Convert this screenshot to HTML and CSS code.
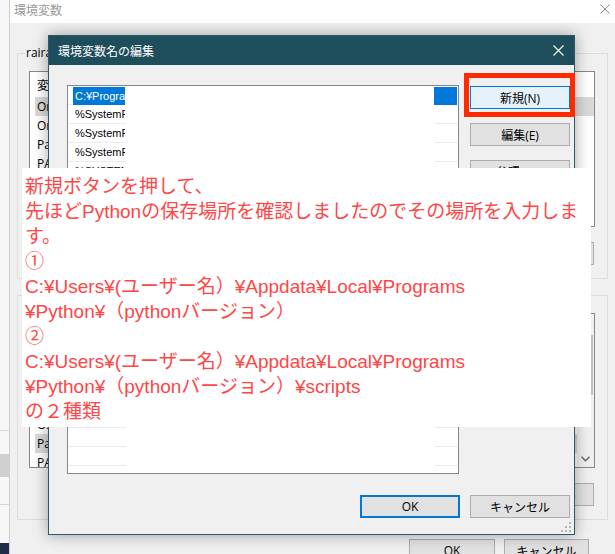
FILE: index.html
```html
<!DOCTYPE html>
<html lang="ja">
<head>
<meta charset="utf-8">
<title>環境変数</title>
<link rel="stylesheet" href="styles.css">
</head>
<body>
<div class="desk">
  <div class="backwin"></div>

  <div class="envwin">
    <div class="env-title">
      <span>環境変数</span>
      <svg class="xicon" width="10" height="10" viewBox="0 0 10 10"><path d="M0.5 0.5L9.5 9.5M9.5 0.5L0.5 9.5" stroke="#8a8a8a" stroke-width="1" fill="none"/></svg>
    </div>
    <div class="env-body">
      <div class="grp grp1">
        <span class="grp-label">rairaのユーザー環境変数(U)</span>
        <div class="list list1">
          <div class="lhead">変数</div>
          <div class="lrow sel">OneDrive</div>
          <div class="lrow">OneDriveConsumer</div>
          <div class="lrow">Path</div>
          <div class="lrow">PATH</div>
          <div class="lrow">TEMP</div>
          <div class="lrow">TMP</div>
        </div>
        <div class="grp-btns">
          <button class="btn">新規(N)...</button>
          <button class="btn">編集(E)...</button>
          <button class="btn">削除(D)</button>
        </div>
      </div>
      <div class="grp grp2">
        <span class="grp-label">システム環境変数(S)</span>
        <div class="list list2">
          <div class="lcontent">
            <div class="lhead">変数</div>
            <div class="lrow">ComSpec</div>
            <div class="lrow">DriverData</div>
            <div class="lrow">NUMBER_OF_PROCESSORS</div>
            <div class="lrow">OnlineServices</div>
            <div class="lrow">OS</div>
            <div class="lrow sel">Path</div>
            <div class="lrow">PATHEXT</div>
          </div>
          <div class="sb">
            <div class="sb-track"><div class="sb-thumb"></div></div>
            <div class="sb-arrow">
              <svg width="9" height="6" viewBox="0 0 9 6"><path d="M0.5 0.8L4.5 4.8L8.5 0.8" stroke="#606060" stroke-width="1.3" fill="none"/></svg>
            </div>
          </div>
        </div>
        <div class="grp-btns">
          <button class="btn">新規(W)...</button>
          <button class="btn">編集(I)...</button>
          <button class="btn">削除(L)</button>
        </div>
      </div>
      <div class="main-btns">
        <button class="btn ok0">OK</button>
        <button class="btn cancel0">キャンセル</button>
      </div>
    </div>
  </div>

  <div class="dlg">
    <div class="dlg-title">
      <span>環境変数名の編集</span>
      <svg class="xicon" width="11" height="11" viewBox="0 0 11 11"><path d="M0.5 0.5L10.5 10.5M10.5 0.5L0.5 10.5" stroke="#ffffff" stroke-width="1.1" fill="none"/></svg>
    </div>
    <div class="dlg-body">
      <div class="elist">
        <div class="erow sel"><span class="ecell">C:¥Program Files (x86)¥Common Files¥Oracle¥Java¥javapath</span><span class="eblock"></span></div>
        <div class="erow"><span class="ecell">%SystemRoot%¥system32</span></div>
        <div class="erow"><span class="ecell">%SystemRoot%</span></div>
        <div class="erow"><span class="ecell">%SystemRoot%¥System32¥Wbem</span></div>
        <div class="erow"><span class="ecell">%SYSTEMROOT%¥System32¥WindowsPowerShell¥v1.0¥</span></div>
        <div class="erow"><span class="ecell">%SYSTEMROOT%¥System32¥OpenSSH¥</span></div>
        <div class="erow"><span class="ecell"></span></div>
        <div class="erow"><span class="ecell"></span></div>
        <div class="erow"><span class="ecell"></span></div>
        <div class="erow"><span class="ecell"></span></div>
        <div class="erow"><span class="ecell"></span></div>
        <div class="erow"><span class="ecell"></span></div>
        <div class="erow"><span class="ecell"></span></div>
        <div class="erow"><span class="ecell"></span></div>
        <div class="erow"><span class="ecell"></span></div>
        <div class="erow"><span class="ecell"></span></div>
        <div class="erow"><span class="ecell"></span></div>
        <div class="erow"><span class="ecell"></span></div>
        <div class="erow"><span class="ecell"></span></div>
        <div class="erow"><span class="ecell"></span></div>
        <div class="erow"><span class="ecell"></span></div>
      </div>
      <div class="btncol">
        <button class="btn btn-hot">新規(N)</button>
        <button class="btn">編集(E)</button>
        <button class="btn">参照(B)...</button>
        <button class="btn">削除(D)</button>
        <button class="btn">上へ移動(U)</button>
        <button class="btn">下へ移動(O)</button>
        <button class="btn">テキストの編集(T)...</button>
      </div>
    </div>
    <div class="dlg-foot">
      <button class="btn btn-ok">OK</button>
      <button class="btn">キャンセル</button>
    </div>
    <svg class="grip" width="10" height="10" viewBox="0 0 10 10">
      <rect x="8" y="0" width="2" height="2" fill="#b4b4b4"/>
      <rect x="4" y="4" width="2" height="2" fill="#b4b4b4"/>
      <rect x="8" y="4" width="2" height="2" fill="#b4b4b4"/>
      <rect x="0" y="8" width="2" height="2" fill="#b4b4b4"/>
      <rect x="4" y="8" width="2" height="2" fill="#b4b4b4"/>
      <rect x="8" y="8" width="2" height="2" fill="#b4b4b4"/>
    </svg>
  </div>

  <div class="note">
    <p>新規ボタンを押して、</p>
    <p>先ほどPythonの保存場所を確認しましたのでその場所を入力します。</p>
    <p>①</p>
    <p>C:¥Users¥(ユーザー名）¥Appdata¥Local¥Programs<br>¥Python¥（pythonバージョン）</p>
    <p>②</p>
    <p>C:¥Users¥(ユーザー名）¥Appdata¥Local¥Programs<br>¥Python¥（pythonバージョン）¥scripts</p>
    <p>の２種類</p>
  </div>

  <div class="redbox"></div>
</div>
</body>
</html>
```
FILE: styles.css
```css
* { box-sizing: border-box; margin: 0; padding: 0; }
html, body { width: 615px; height: 554px; overflow: hidden; }
body {
  background: #f0f0f0;
  font-family: "Open Sans", "Noto Sans CJK JP", sans-serif;
  font-size: 12px;
  color: #000;
}
.desk { position: relative; width: 615px; height: 554px; overflow: hidden; }

/* window peeking on the far left */
.backwin {
  position: absolute; left: 0; top: 0; width: 10px; height: 554px;
  background:
    linear-gradient(#1d2d4a, #1d2d4a) 0 543px / 10px 11px no-repeat,
    linear-gradient(#d8d8d8, #d8d8d8) 0 430px / 10px 1px no-repeat,
    linear-gradient(#d0d0d0, #d0d0d0) 0 454px / 10px 23px no-repeat,
    linear-gradient(#d8d8d8, #d8d8d8) 0 504px / 10px 1px no-repeat,
    #f7f7f7;
  border-right: 1px solid #cfcfcf;
}

/* outer 環境変数 window */
.envwin {
  position: absolute; left: 10px; top: 0; width: 620px; height: 554px;
  background: #f0f0f0;
}
.env-title {
  width: 605px; height: 23px; background: #fff;
  display: flex; align-items: center; justify-content: space-between;
  padding: 0 5px 5px 4px;
  color: #9a9a9a;
  font-family: "Noto Sans CJK JP", sans-serif;
}
.env-body { padding-left: 7px; }
.grp {
  position: relative; width: 591px;
  border: 1px solid #dcdcdc;
  padding: 17px 0 0 11px;
}
.grp1 { margin-top: 30px; height: 226px; }
.grp2 { margin-top: 16px; height: 225px; }
.grp-label {
  position: absolute; left: 7px; top: -9px;
  background: #f0f0f0; padding: 0 1px;
  line-height: 16px; white-space: nowrap;
  font-family: "Open Sans", "Noto Sans CJK JP", sans-serif;
}
.list {
  width: 566px; background: #fff;
  border: 1px solid #828790; overflow: hidden;
}
.list1 { height: 156px; }
.list2 { height: 155px; display: flex; }
.lcontent { flex: 1; }
.lhead { height: 25px; padding-left: 7px; display: flex; align-items: center; }
.lrow {
  height: 19px; margin-left: 5px; padding-left: 2px;
  display: flex; align-items: center; white-space: nowrap;
}
.lrow.sel { background: #d9d9d9; }
.sb { width: 17px; display: flex; flex-direction: column; background: #f0f0f0; }
.sb-track { flex: 1; display: flex; justify-content: flex-end; padding: 21px 1px 0 0; }
.sb-thumb { width: 6px; height: 60px; background: #c2c2c2; }
.sb-arrow { height: 17px; display: flex; align-items: center; justify-content: center; }

.btn {
  height: 23px;
  border: 1px solid #adadad;
  background: #e1e1e1;
  color: #000;
  font-family: "Open Sans", "Noto Sans CJK JP", sans-serif;
  font-size: 12px;
  display: flex; align-items: center; justify-content: center;
  white-space: nowrap; overflow: hidden;
}
.grp-btns { display: flex; justify-content: flex-end; gap: 8px; margin-top: 15px; padding-right: 13px; }
.grp-btns .btn { width: 75px; }
.main-btns { display: flex; gap: 9px; margin: 19px 0 0 392px; }
.ok0 { width: 86px; }
.cancel0 { width: 85px; }

/* 環境変数名の編集 dialog */
.dlg {
  position: absolute; left: 48px; top: 35px; width: 527px; height: 500px;
  background: #f0f0f0;
  border: 1px solid #2c5a69;
  box-shadow: 0 0 14px rgba(0, 0, 0, 0.35);
  display: flex; flex-direction: column;
}
.dlg-title {
  height: 29px; background: #1e4d5c; color: #fff;
  display: flex; align-items: center; justify-content: space-between;
  padding: 0 10px 0 9px;
  font-family: "Noto Sans CJK JP", sans-serif;
}
.dlg-body { display: flex; gap: 11px; padding: 20px 4px 0 18px; }
.elist {
  width: 392px; height: 389px; background: #fff;
  border: 1px solid #828790; overflow: hidden;
}
.erow {
  height: 19px; display: flex;
  background:
    linear-gradient(#ebebeb, #ebebeb) 0 100% / 58px 1px no-repeat,
    linear-gradient(#ebebeb, #ebebeb) 367px 100% / 23px 1px no-repeat;
}
.ecell {
  margin-left: 5px; width: 52px; padding-left: 2px;
  overflow: hidden; white-space: nowrap; line-height: 18px;
  font-family: "Liberation Sans", "Noto Sans CJK JP", sans-serif;
  font-size: 11px;
}
.erow.sel .ecell { background: #0078d7; color: #fff; margin-top: 1px; height: 18px; }
.eblock { margin-left: auto; margin-right: 1px; margin-top: 1px; width: 23px; height: 18px; background: #0078d7; }
.btncol { width: 100px; display: flex; flex-direction: column; gap: 14px; padding-top: 1px; }
.btn-hot { background: #e5f1fb; border-color: #0078d7; }
.dlg-foot { display: flex; justify-content: flex-end; gap: 10px; padding: 21px 4px 0 0; }
.dlg-foot .btn { width: 100px; }
.btn-ok { border: 2px solid #0078d7; }
.grip { position: absolute; right: 3px; bottom: 2px; }

/* annotation */
.note {
  position: absolute; left: 22px; top: 168px; width: 569px; height: 259px;
  background: #fff; color: #ff4646;
  font-family: "Liberation Sans", "Noto Sans CJK JP", sans-serif;
  font-size: 19px; line-height: 25px;
  padding: 6px 0 0 3px;
}
.redbox {
  position: absolute; left: 464px; top: 73px; width: 111px; height: 44px;
  border: 5px solid #ff2a00;
}
```
